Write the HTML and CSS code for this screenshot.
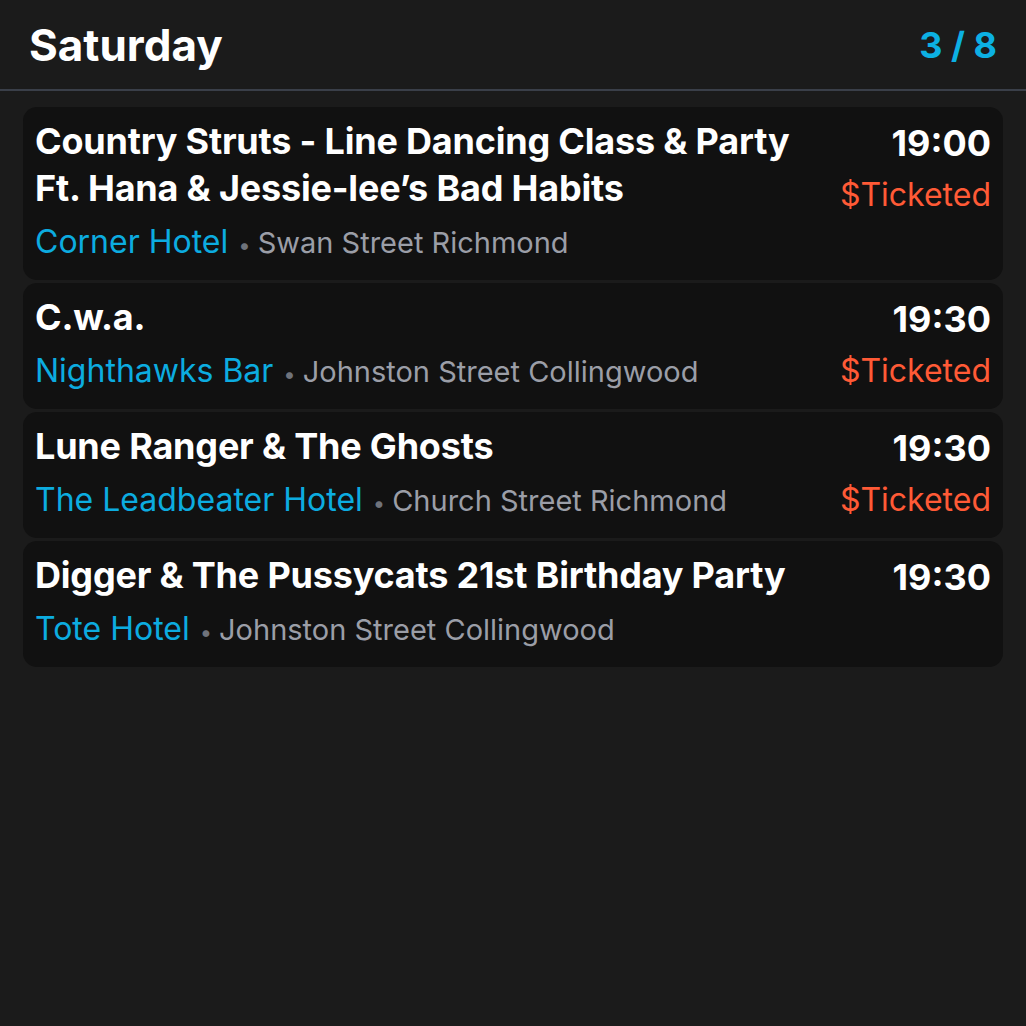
FILE: index.html
```html
<!DOCTYPE html>
<html>
<head>
<meta charset="utf-8">
<link rel="stylesheet" href="styles.css">
</head>
<body>
<header class="top">
  <h1 class="day">Saturday</h1>
  <div class="page">3 / 8</div>
</header>
<main class="list">
  <div class="card">
    <div class="info">
      <div class="title">Country Struts - Line Dancing Class &amp; Party Ft. Hana &amp; Jessie-lee’s Bad Habits</div>
      <div class="where"><span class="venue">Corner Hotel</span><span class="dot">•</span><span class="addr">Swan Street Richmond</span></div>
    </div>
    <div class="meta">
      <div class="time">19:00</div>
      <div class="price">$Ticketed</div>
    </div>
  </div>
  <div class="card">
    <div class="info">
      <div class="title">C.w.a.</div>
      <div class="where"><span class="venue">Nighthawks Bar</span><span class="dot">•</span><span class="addr">Johnston Street Collingwood</span></div>
    </div>
    <div class="meta">
      <div class="time">19:30</div>
      <div class="price">$Ticketed</div>
    </div>
  </div>
  <div class="card">
    <div class="info">
      <div class="title">Lune Ranger &amp; The Ghosts</div>
      <div class="where"><span class="venue">The Leadbeater Hotel</span><span class="dot">•</span><span class="addr">Church Street Richmond</span></div>
    </div>
    <div class="meta">
      <div class="time">19:30</div>
      <div class="price">$Ticketed</div>
    </div>
  </div>
  <div class="card">
    <div class="info">
      <div class="title">Digger &amp; The Pussycats 21st Birthday Party</div>
      <div class="where"><span class="venue">Tote Hotel</span><span class="dot">•</span><span class="addr">Johnston Street Collingwood</span></div>
    </div>
    <div class="meta">
      <div class="time">19:30</div>
    </div>
  </div>
</main>
</body>
</html>
```
FILE: styles.css
```css
* { box-sizing: border-box; }
html, body { margin: 0; padding: 0; }
body {
  background: #1b1b1b;
  color: #ffffff;
  font-family: Inter, "Noto Sans", sans-serif;
  width: 1026px;
  height: 1026px;
}
.top {
  height: 91px;
  padding: 0 29px 0 29px;
  display: flex;
  align-items: center;
  justify-content: space-between;
  border-bottom: 2px solid #3a3f49;
}
.day {
  margin: 0;
  font-size: 44px;
  font-weight: 700;
  line-height: 50px;
}
.page {
  font-size: 36px;
  font-weight: 700;
  line-height: 50px;
  color: #0cb0e3;
}
.list {
  padding: 16px 23px;
  display: flex;
  flex-direction: column;
  gap: 3px;
}
.card {
  background: #111111;
  border-radius: 14px;
  padding: 11px 12px 16px 12px;
  display: flex;
  justify-content: space-between;
  gap: 24px;
}
.info { flex: 1; min-width: 0; }
.title {
  font-size: 36px;
  font-weight: 700;
  line-height: 47px;
  letter-spacing: -0.2px;
}
.where {
  margin-top: 8px;
  font-size: 32px;
  line-height: 44px;
  height: 44px;
  white-space: nowrap;
}
.venue { color: #0cace0; }
.dot { color: #6f737b; margin: 0 7px 0 10px; font-size: 22px; }
.addr { color: #9b9ea7; font-size: 29px; }
.meta {
  margin-top: 2px;
  display: flex;
  flex-direction: column;
  align-items: flex-end;
}
.time {
  font-size: 36px;
  font-weight: 700;
  line-height: 47px;
}
.price {
  margin-top: 6px;
  color: #ff5a36;
  font-size: 32px;
  line-height: 44px;
}
```
